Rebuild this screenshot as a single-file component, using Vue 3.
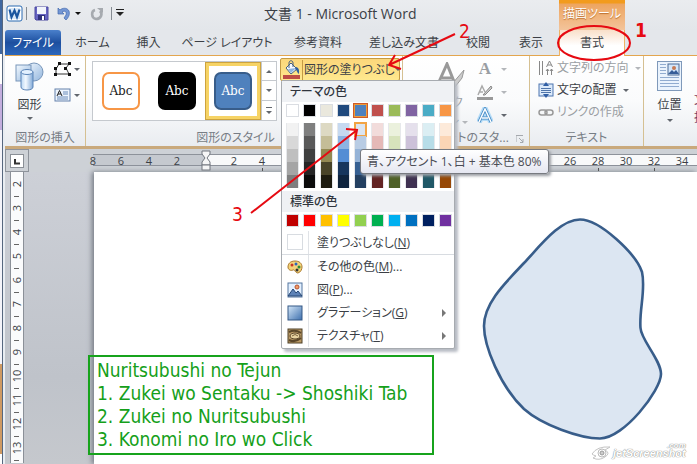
<script setup>
const tabs = ['ホーム', '挿入', 'ページ レイアウト', '参考資料', '差し込み文書', '校閲', '表示']

const themeColors = [
  { base: '#ffffff', shades: ['#f2f2f2', '#d8d8d8', '#bfbfbf', '#a5a5a5', '#7f7f7f'] },
  { base: '#000000', shades: ['#7f7f7f', '#595959', '#3f3f3f', '#262626', '#0c0c0c'] },
  { base: '#eae8dd', shades: ['#ddd9c3', '#c4bd97', '#938953', '#494429', '#1d1b10'] },
  { base: '#1f497d', shades: ['#c6d9f0', '#8db3e2', '#548dd4', '#17365d', '#0f243e'] },
  { base: '#4f81bd', shades: ['#dbe5f1', '#b8cce4', '#95b3d7', '#366092', '#244061'], selected: true },
  { base: '#c0504d', shades: ['#f2dcdb', '#e5b9b7', '#d99694', '#953734', '#632423'] },
  { base: '#9bbb59', shades: ['#ebf1dd', '#d7e3bc', '#c3d69b', '#76923c', '#4f6128'] },
  { base: '#8064a2', shades: ['#e5e0ec', '#ccc1d9', '#b2a2c7', '#5f497a', '#3f3151'] },
  { base: '#4bacc6', shades: ['#dbeef3', '#b7dde8', '#92cddc', '#31859b', '#205867'] },
  { base: '#f79646', shades: ['#fdeada', '#fbd5b5', '#fac08f', '#e36c09', '#974806'] },
]
const standardColors = ['#c00000', '#ff0000', '#ffc000', '#ffff00', '#92d050', '#00b050', '#00b0f0', '#0070c0', '#002060', '#7030a0']

const marginTicks = [8, 6, 4, 2]
const textTicks = Array.from({ length: 17 }, (_, i) => (i + 1) * 2)
const verticalTicks = Array.from({ length: 12 }, (_, i) => i + 2)

const steps = [
  'Nuritsubushi no Tejun',
  '1. Zukei wo Sentaku -> Shoshiki Tab',
  '2. Zukei no Nuritsubushi',
  '3. Konomi no Iro wo Click',
]
</script>

<template>
  <div class="desktop">
    <div class="window">
      <header class="titlebar">
        <div class="quick">
          <svg class="word-icon" width="17" height="17" viewBox="0 0 17 17">
            <rect x="1" y="1" width="15" height="15" rx="2" fill="#fff" stroke="#2a6ab2" />
            <rect x="3" y="3" width="11" height="11" fill="#d9e8f7" />
            <path d="M3.500 4.500L5.500 12L8.500 5.500L11 12L13.500 4.500" fill="none" stroke="#1b569f" stroke-width="2.200" />
          </svg>
          <i class="bar"></i>
          <button class="save" aria-label="上書き保存">
            <svg width="15" height="15" viewBox="0 0 15 15">
              <path d="M1 1H14V14H2L1 13Z" fill="#6865c2" stroke="#4b48a0" />
              <rect x="3" y="1" width="9" height="7" fill="#f1f4fb" />
              <path d="M4 9H11V14H4Z" fill="#30317c" />
              <rect x="8" y="10" width="2" height="4" fill="#fff" />
            </svg>
          </button>
          <button class="undo" aria-label="元に戻す">
            <svg width="14" height="14" viewBox="0 0 14 14">
              <path d="M1 1V7H7L5 5C8 3 10 5 9 8L7 11L9 13C12 10 13 7 12 4C10 0 5 1 3 3Z" fill="#7497d5" stroke="#4269ae" stroke-width=".7" />
            </svg>
          </button>
          <i class="caret dark"></i>
          <button class="redo" aria-label="やり直し">
            <svg width="14" height="14" viewBox="0 0 14 14">
              <path d="M5 3C1 4 1 11 6 12C11 12 13 7 10 4" fill="none" stroke="#a6aaaf" stroke-width="2.600" />
              <path d="M7 1H13V6Z" fill="#a6aaaf" />
            </svg>
          </button>
          <i class="bar"></i>
          <i class="more"></i>
        </div>
        <h1>文書 1 - Microsoft Word</h1>
        <div class="context">描画ツール</div>
      </header>

      <nav class="tabs">
        <a class="file" href="#">ファイル</a>
        <a v-for="t in tabs" :key="t" href="#">{{ t }}</a>
        <a class="active" href="#">書式</a>
      </nav>

      <section class="ribbon">
        <div class="group">
          <div class="body insert">
            <button class="big">
              <svg width="29" height="29" viewBox="0 0 29 29">
                <defs>
                  <linearGradient id="shape" x2="1" y2="1"><stop stop-color="#f4faff" /><stop offset="1" stop-color="#92b5dd" /></linearGradient>
                  <linearGradient id="tube"><stop stop-color="#b9d6f3" /><stop offset=".4" stop-color="#f3f9ff" /><stop offset="1" stop-color="#81a9d7" /></linearGradient>
                </defs>
                <circle cx="19" cy="10" r="9" fill="url(#shape)" stroke="#7896ba" />
                <rect x="1" y="3" width="15" height="16" fill="url(#shape)" stroke="#7896ba" />
                <path d="M6 10V25C6 29 18 29 18 25V10Z" fill="url(#tube)" stroke="#5b84b7" />
                <ellipse cx="12" cy="10" rx="6" ry="2.500" fill="#e3f1ff" stroke="#5b84b7" />
              </svg>
              <span>図形</span>
              <i class="caret"></i>
            </button>
            <div class="stack">
              <button class="small" aria-label="図形の編集">
                <svg width="17" height="14" viewBox="0 0 17 14">
                  <path d="M5 2H15L12 6L15 12H2V7Z" fill="none" stroke="#333" />
                  <path d="M4 0h3v3H4zM14 0h3v3h-3zM10 5h3v3h-3zM14 11h3v3h-3zM0 11h3v3H0zM0 5h3v3H0z" fill="#111" />
                </svg>
                <i class="caret"></i>
              </button>
              <button class="small" aria-label="テキスト ボックス">
                <svg width="17" height="14" viewBox="0 0 17 14">
                  <rect x="1" y="1" width="15" height="12" fill="#eef5fd" stroke="#6481ab" />
                  <path d="M9 4H14M9 6H14M3 9H14M3 11H14" stroke="#6b8cba" />
                  <path d="M3 8L5.500 2.500L8 8M4 6H7" fill="none" stroke="#222" />
                </svg>
                <i class="caret"></i>
              </button>
            </div>
          </div>
          <div class="label">図形の挿入</div>
        </div>

        <div class="group">
          <div class="body styles">
            <div class="gallery">
              <button class="cell"><span class="abc outline">Abc</span></button>
              <button class="cell"><span class="abc solid">Abc</span></button>
              <button class="cell picked"><span class="abc blue">Abc</span></button>
              <div class="scroll">
                <button aria-label="上へ"><i class="caret up"></i></button>
                <button aria-label="下へ"><i class="caret"></i></button>
                <button aria-label="その他"><i class="more thin"></i></button>
              </div>
            </div>
            <button class="fill">
              <svg width="21" height="20" viewBox="0 0 21 20">
                <path d="M5 8L10 3L16 9L10 14Z" fill="#f5f9ff" stroke="#47617f" />
                <path d="M7 9L15 8L10 13Z" fill="#8fb4df" />
                <path d="M8 8V3C8 0 12 0 12 3V7" fill="none" stroke="#49607e" />
                <path d="M15 7C19 8 18 12 18 14C16 13 16 10 14 9Z" fill="#315f9d" />
                <rect x="2" y="15" width="17" height="4" fill="#be4d45" />
              </svg>
              <span>図形の塗りつぶし</span>
              <i class="caret"></i>
            </button>
          </div>
          <div class="label style-label">図形のスタイル</div>
        </div>

        <div class="group">
          <div class="body art">
            <button class="big muted">
              <svg width="30" height="27" viewBox="0 0 30 27">
                <path d="M3 22L12 2L20 22M7 16H17" fill="none" stroke="#999" stroke-width="3" />
                <path d="M17 22L29 8L27 16L20 25L15 26Z" fill="#ccc" stroke="#999" />
              </svg>
              <span>クイック<br>スタイル <i class="caret"></i></span>
            </button>
            <div class="stack">
              <button class="small muted"><span class="serif-a">A</span><i class="caret"></i></button>
              <button class="small muted" aria-label="文字の輪郭">
                <svg width="16" height="17" viewBox="0 0 16 17">
                  <path d="M1 11L5 2L8 8M2 8H6" fill="none" stroke="#aaa" stroke-width="1.500" />
                  <path d="M6 11L14 2L15 4L8 11Z" fill="#ccc" stroke="#888" />
                  <rect y="13" width="16" height="3" fill="#999" />
                </svg>
                <i class="caret"></i>
              </button>
              <button class="small" aria-label="文字の効果">
                <svg width="16" height="17" viewBox="0 0 16 17">
                  <path d="M2 15L8 2L14 15M5 11H11" fill="none" stroke="#b5dcf7" stroke-width="6" stroke-linejoin="round" />
                  <path d="M2 15L8 2L14 15M5 11H11" fill="none" stroke="#4388c4" stroke-width="3" />
                  <path d="M2 15L8 2L14 15M5 11H11" fill="none" stroke="#fff" stroke-width="1.500" />
                </svg>
                <i class="caret"></i>
              </button>
            </div>
          </div>
          <div class="label art-label">ワードアートのスタ... <svg class="launch" width="8" height="8" viewBox="0 0 8 8"><path d="M0 7V.5H7M3 3L7 7M7 4V7.500H4" fill="none" stroke="#a5a9ae" /></svg></div>
        </div>

        <div class="group">
          <div class="body text">
            <button class="row muted">
              <svg width="16" height="16" viewBox="0 0 16 16">
                <path d="M1.500 1V15M4.500 1V15M9.500 9V15M13.500 9V15" stroke="#888" />
                <path d="M8.500 7L11.500 1L14.500 7M9.500 5H13.500M8 11L9.500 9L11 11M12 11L13.500 9L15 11" fill="none" stroke="#888" />
              </svg>
              <span>文字列の方向</span><i class="caret"></i>
            </button>
            <button class="row">
              <svg width="16" height="16" viewBox="0 0 16 16">
                <rect x="1" y="2" width="14" height="12" fill="#dceafa" stroke="#4d75b0" />
                <path d="M3 6.500H13M3 8.500H13M3 10.500H13" stroke="#5075aa" />
                <path d="M8 0L11 4H5ZM8 16L11 12H5Z" fill="#315fa5" />
              </svg>
              <span>文字の配置</span><i class="caret"></i>
            </button>
            <button class="row muted">
              <svg width="16" height="16" viewBox="0 0 16 16">
                <rect x="1" y="6" width="8" height="5" rx="2.500" fill="none" stroke="#999" stroke-width="1.500" />
                <rect x="7" y="6" width="8" height="5" rx="2.500" fill="none" stroke="#999" stroke-width="1.500" />
              </svg>
              <span>リンクの作成</span>
            </button>
          </div>
          <div class="label">テキスト</div>
        </div>

        <div class="group last">
          <div class="body place">
            <button class="big">
              <svg width="25" height="30" viewBox="0 0 25 30">
                <rect x=".5" y=".5" width="24" height="29" fill="#eaf3fd" stroke="#7f99ba" />
                <path d="M3 3.500H9M3 6.500H9M3 9.500H9M3 12.500H9M3 16.500H22M3 19.500H22M3 22.500H22M3 25.500H22" stroke="#91acd0" />
                <rect x="11" y="3" width="11" height="11" fill="#d3e6fa" stroke="#4b6a95" />
                <circle cx="17" cy="7" r="2" fill="#c67b55" />
                <path d="M11 13L15 9L17 11L19 9L22 13Z" fill="#365d98" />
              </svg>
              <span>位置</span>
              <i class="caret"></i>
            </button>
            <button class="wrap">文字列の<br>折り返し</button>
          </div>
        </div>
      </section>

      <div class="ruler">
        <div class="corner">
          <svg width="14" height="14" viewBox="0 0 14 14"><rect x=".5" y=".5" width="13" height="13" fill="#fff" stroke="#8a8f96" /><path d="M5 5V9.500H10" fill="none" stroke="#333" stroke-width="2" /></svg>
        </div>
        <div class="ticks margin"><span v-for="n in marginTicks" :key="n">{{ n }}</span></div>
        <svg class="indent" width="10" height="21" viewBox="0 0 10 21">
          <path d="M1 1H9V4L6 8L9 12V15H1V12L4 8L1 4Z" fill="#f6f6f6" stroke="#72777f" />
          <rect x="1" y="15" width="8" height="5" fill="#f6f6f6" stroke="#72777f" />
        </svg>
        <div class="ticks body-area"><span v-for="n in textTicks" :key="n" :class="{ mark: n % 4 === 0 }">{{ n }}</span></div>
      </div>

      <main class="document">
        <div class="vruler"><span v-for="n in verticalTicks" :key="n"><b>{{ n }}</b></span></div>
        <div class="page"></div>
      </main>
    </div>

    <svg class="freeform" width="182" height="224" viewBox="482 217 182 224">
      <path d="M580 219.500C600 219.500 636 254 642 272C646 290 639 310 640.500 328C641 340 661 360 661 374C661 390 624 438.500 600 438.500C580 438.500 542 425 524 409C500 386 484 346 484 326C484 304 503 285 524 263C540 246 560 219.500 580 219.500Z" fill="#dce6f2" stroke="#385d8a" stroke-width="2.600" />
    </svg>

    <div class="menu">
      <h2>テーマの色</h2>
      <div class="swatches theme">
        <button v-for="c in themeColors" :key="c.base" :class="{ selected: c.selected }" :style="{ background: c.base }" :aria-label="c.base"></button>
      </div>
      <div class="swatches shades">
        <div v-for="c in themeColors" :key="c.base" class="column">
          <button v-for="(s, i) in c.shades" :key="s" :class="{ hover: c.selected && i === 0 }" :style="{ background: s }" :aria-label="s"></button>
        </div>
      </div>
      <h2>標準の色</h2>
      <div class="swatches standard">
        <button v-for="c in standardColors" :key="c" :style="{ background: c }" :aria-label="c"></button>
      </div>
      <button class="item none"><i class="blank"></i><span>塗りつぶしなし(<u>N</u>)</span></button>
      <button class="item">
        <svg width="16" height="16" viewBox="0 0 16 16">
          <path d="M8 2C3 2 1 5 1 8C1 11 4 12 6 11C8 10 8 14 11 14C14 13 15 10 15 8C15 4 12 2 8 2Z" fill="#f4d37a" stroke="#a9782a" />
          <circle cx="5" cy="6" r="1.500" fill="#c93526" /><circle cx="9" cy="5" r="1.500" fill="#2c66bc" /><circle cx="12" cy="8" r="1.500" fill="#2d8b37" /><circle cx="10" cy="11" r="1.500" fill="#333" />
        </svg>
        <span>その他の色(<u>M</u>)...</span>
      </button>
      <button class="item">
        <svg width="16" height="16" viewBox="0 0 16 16">
          <rect x="1" y="1" width="14" height="14" fill="#e3f0ff" stroke="#54769f" />
          <circle cx="10" cy="5" r="2" fill="#ef9d67" stroke="#b85332" />
          <path d="M1 14L6 7L9 11L11 9L15 14Z" fill="#5d82b6" stroke="#294976" />
        </svg>
        <span>図(<u>P</u>)...</span>
      </button>
      <button class="item">
        <svg width="16" height="16" viewBox="0 0 16 16">
          <defs><linearGradient id="grad" x2="1" y2="1"><stop stop-color="#d4e7f8" /><stop offset="1" stop-color="#3d6fae" /></linearGradient></defs>
          <rect x="1" y="1" width="14" height="14" fill="url(#grad)" stroke="#355986" />
        </svg>
        <span>グラデーション(<u>G</u>)</span><i class="sub"></i>
      </button>
      <button class="item">
        <svg width="16" height="16" viewBox="0 0 16 16">
          <rect x="1" y="1" width="14" height="14" fill="#b99965" stroke="#4e4028" />
          <path d="M2 4Q8 1 14 5M2 12Q8 15 14 10" fill="none" stroke="#5a472b" stroke-width="2" />
          <ellipse cx="8" cy="8" rx="5" ry="3" fill="#e8d3a1" stroke="#59452b" /><path d="M5 8Q8 5 11 8" fill="none" stroke="#795f3c" />
        </svg>
        <span>テクスチャ(<u>T</u>)</span><i class="sub"></i>
      </button>
    </div>

    <div class="tooltip" role="tooltip">青、アクセント 1、白 + 基本色 80%</div>

    <div class="note"><p v-for="s in steps" :key="s">{{ s }}</p></div>

    <div class="watermark">
      <svg width="22" height="16" viewBox="0 0 22 16">
        <path d="M1 9Q6 1 19 2L14 5Q20 8 14 12Q8 16 2 13L5 11Q2 10 1 9Z" fill="#fff" stroke="#c4c4c4" />
        <circle cx="11" cy="8" r="4" fill="#fff" stroke="#bbb" /><circle cx="11" cy="8" r="2" fill="#ccc" stroke="#999" />
      </svg>
      <span class="brand">jetScreenshot<small>.com</small></span>
    </div>

    <svg class="marks" width="697" height="464" viewBox="0 0 697 464">
      <g fill="none" stroke="#e60a12" stroke-width="2">
        <ellipse cx="594" cy="43" rx="36" ry="17" />
        <path d="M455 34L389 65M395 55L389 65L401 69" />
        <path d="M251 213L357 130M346 129L357 130L355 140" />
      </g>
    </svg>
    <b class="num one">1</b>
    <b class="num two">2</b>
    <b class="num three">3</b>
  </div>
</template>

<style>
body { margin: 0; overflow: hidden; }
</style>

<style scoped>
.desktop {
  position: relative;
  min-height: 100vh;
  display: flex;
  overflow: hidden;
  box-sizing: border-box;
  padding-left: 2px;
  font: 12px/18px "Open Sans", "Noto Sans CJK JP", sans-serif;
  font-feature-settings: "palt";
  color: #3b3f46;
  background: linear-gradient(#3f67a0 0 54px, #fff 54px 84px, #c3aede 84px 130px, #f4f4fa 130px 364px, #cf9a63 364px 454px, #fff 454px);
}
button { font: inherit; color: inherit; font-feature-settings: inherit; border: 0; padding: 0; margin: 0; background: none; }
a { color: inherit; text-decoration: none; }
h1, h2, p { margin: 0; font: inherit; }
svg { display: block; flex: none; }
.window { flex: 1; min-width: 0; display: flex; flex-direction: column; border-left: 1px solid #56677e; box-shadow: inset 2px 0 #e9edf2; padding-left: 2px; background: #e6e9ed; }

.titlebar { height: 30px; display: grid; grid-template-columns: 259px 295px 66px 1fr; background: linear-gradient(#eaecef, #e3e6ea); }
.quick { display: flex; align-items: center; padding: 0 0 3px 1px; }
.bar { width: 1px; height: 13px; background: #858b92; }
.word-icon { margin-right: 3px; }
.save { margin-left: 7px; }
.undo { margin: 0 4px 0 8px; }
.redo { margin: 0 7px 0 9px; }
h1 { font-size: 14px; line-height: 28px; white-space: nowrap; }
.context { background: linear-gradient(#f29b1d 0 3px, #eda560 4px, #f3c49b); color: #fff; text-align: center; line-height: 28px; text-shadow: 0 1px 1px #b96d2c; white-space: nowrap; }
.caret { display: inline-block; flex: none; width: 0; height: 0; border: 3px solid transparent; border-top-color: #62676e; border-bottom: 0; }
.caret.dark { border-top-color: #111; }
.caret.up { border-top: 0; border-bottom: 3px solid #62676e; }
.more { width: 0; margin-left: 4px; border: 4px solid transparent; border-top-color: #222; border-bottom: 0; position: relative; }
.more::before { content: ""; position: absolute; left: -4px; top: -7px; width: 8px; height: 1px; background: #222; }
.more.thin { margin: 4px 0 0; border-width: 3px 3px 0; border-top-color: #62676e; }
.more.thin::before { left: -3px; width: 6px; background: #62676e; }

.tabs { height: 25px; display: grid; grid-template-columns: 56px 63px 49px 108px 74px 98px 50px 56px 66px 1fr; background: #e4e7eb; border-bottom: 1px solid #e3a64f; }
.tabs a { display: flex; align-items: center; justify-content: center; white-space: nowrap; }
.tabs .file { background: linear-gradient(#4a80cb, #1d4f9f 50%, #2c67bb); color: #fff; border-radius: 3px 3px 0 0; }
.tabs .active { background: linear-gradient(#f9dfc9, #fff 60%); border: solid #f0b263; border-width: 0 1px; margin-bottom: -1px; }

.ribbon { height: 90px; display: grid; grid-template-columns: 81px 317px 127px 114px minmax(0, 1fr); background: linear-gradient(#fff, #fafbfc 50%, #e9ecf0); border-bottom: 3px solid #c9a97c; overflow: hidden; }
.group { display: flex; flex-direction: column; min-width: 0; border-right: 1px solid #d5c092; }
.group.last { border: 0; }
.body { flex: 1; min-height: 0; display: flex; align-items: flex-start; }
.label { height: 21px; line-height: 20px; text-align: center; color: #777d85; white-space: nowrap; position: relative; }
.style-label { padding-right: 17px; }
.art-label { padding-right: 23px; }
.launch { position: absolute; right: 5px; top: 7px; }
.big { display: flex; flex-direction: column; align-items: center; white-space: nowrap; }
.big span { line-height: 17px; }
.muted { color: #9a9ea3; }
.muted .caret { border-top-color: #b3b6ba; }
.insert { padding: 6px 0 0 10px; gap: 10px; }
.insert .big span { margin: 5px 0 4px; }
.stack { display: flex; flex-direction: column; gap: 12px; }
.small { display: flex; align-items: center; gap: 3px; }
.styles { padding: 5px 0 0 6px; gap: 3px; }
.gallery { display: grid; grid-template-columns: 56px 56px 56px 15px; height: 58px; border: 1px solid #c5c9ce; background: #fff; }
.cell { display: grid; place-items: center; border: 3px solid transparent; }
.cell.picked { border: 4px solid #f6d365; outline: 1px solid #cda33e; outline-offset: -1px; background: #fff; }
.abc { width: 34px; height: 34px; border-radius: 7px; border: 2px solid #000; font: 12px/34px "DejaVu Serif", "Liberation Serif", serif; }
.abc.outline { border-color: #f79646; color: #222; }
.abc.solid { background: #000; color: #fff; }
.abc.blue { background: #4f81bd; border-color: #385d8a; color: #fff; }
.scroll { display: grid; grid-template-rows: repeat(3, 1fr); border-left: 1px solid #c5c9ce; }
.scroll button { display: grid; place-items: center; border-bottom: 1px solid #c5c9ce; }
.scroll button:last-child { border: 0; }
.fill { align-self: flex-start; display: flex; align-items: center; margin-top: -3px; width: 120px; height: 23px; border: 1px solid #c49a44; border-radius: 2px; background: linear-gradient(#fcd77b, #fddf83 50%, #ffe98f); white-space: nowrap; }
.fill svg { border-right: 1px solid #c49a44; }
.fill span { flex: 1; text-align: left; padding-left: 1px; }
.fill .caret { margin-right: 3px; }
.art { padding: 4px 0 0 10px; justify-content: space-between; }
.art .big { width: 58px; padding-top: 2px; }
.art .big span { margin-top: 5px; }
.art .big svg { margin-left: 15px; }
.art .stack { padding-right: 22px; gap: 5px; }
.art .small { height: 18px; gap: 8px; }
.serif-a { width: 16px; font: bold 17px/18px "Liberation Serif", serif; text-align: center; }
.text { flex-direction: column; padding: 1px 0 0 8px; }
.row { height: 22px; display: flex; align-items: center; gap: 3px; white-space: nowrap; }
.row .caret { margin-left: 3px; }
.place { padding: 5px 0 0 13px; gap: 12px; }
.place .big span { margin: 5px 0 6px; }
.wrap { padding-top: 30px; text-align: left; white-space: nowrap; color: #7a3d62; }

.ruler { height: 23px; display: flex; align-items: flex-start; background: #cdd1d6; overflow: hidden; }
.corner { width: 22px; height: 21px; border: 1px solid #8e939b; display: grid; place-items: center; margin-right: 64px; flex: none; }
.ticks { display: flex; flex: none; height: 10px; margin-top: 5px; border: solid #8d929a; border-width: 1px 0; font: 11px/11px "Open Sans", sans-serif; }
.ticks span { width: 28px; flex: none; text-align: center; position: relative; }
.ticks.margin { background: #c5c9cf; width: 112px; }
.ticks.margin span:first-child { margin-left: -14px; }
.ticks.body-area { flex: 1; padding-left: 14px; background: #f8f9fa; margin-left: -5px; }
.ticks .mark::after { content: ""; position: absolute; left: 14px; top: 13px; width: 1px; height: 3px; background: #555; }
.indent { position: relative; z-index: 1; margin: 1px 0 0 -4px; }

.document { flex: 1; display: flex; background: linear-gradient(#cdd0d7, #bfc3ca 70%, #c5c8cd); }
.vruler { width: 12px; margin-left: 5px; background: #fafbfc; border: solid #8b9098; border-width: 0 1px; font: 11px/12px "Open Sans", sans-serif; height: 291px; overflow: hidden; }
.vruler span { height: 24px; display: grid; place-items: center; position: relative; }
.vruler span::after { content: ""; position: absolute; left: 3px; top: 24px; width: 5px; height: 1px; background: #666; }
.vruler b { font-weight: normal; transform: rotate(-90deg); }
.page { flex: 1; margin-left: 70px; background: #fff; box-shadow: -2px 0 5px #747a83; }

.freeform { position: absolute; left: 482px; top: 217px; }
.menu { position: absolute; left: 281px; top: 80px; width: 172px; background: #fff; border: 1px solid #a7abb0; border-radius: 2px; box-shadow: 3px 3px 3px #b8bcc4; padding-bottom: 1px; }
.menu h2 { height: 21px; line-height: 21px; padding-left: 8px; font-weight: 500; background: #eff1f4; color: #30353d; }
.swatches { display: grid; grid-template-columns: repeat(10, 13px); gap: 4px; padding: 2px 4px; }
.theme button, .standard button { height: 13px; border: 1px solid #dadde2; box-sizing: border-box; }
.theme .selected { border-color: #ef9b38; outline: 1px solid #cf5b27; }
.shades { padding: 4px 4px 3px; }
.column { display: grid; grid-template-rows: repeat(5, 13px); border: solid #e6e8eb; border-width: 0 1px; }
.column .hover { outline: 2px solid #f2a444; outline-offset: -1px; }
.standard { padding: 2px 4px 3px; }
.item { width: 100%; height: 23px; display: flex; align-items: center; padding: 0 8px 0 5px; text-align: left; }
.item span { flex: 1; border-left: 1px solid #e0e3e7; margin-left: 5px; padding-left: 8px; line-height: 23px; }
.item.none { border-bottom: 1px solid #d8dce1; height: 25px; }
.blank { width: 14px; height: 14px; border: 1px solid #d8dce1; }
.sub { border: 4px solid transparent; border-left-color: #777; border-right: 0; }
.tooltip { position: absolute; left: 360px; top: 149px; padding: 2px 6px; border: 1px solid #777a80; border-radius: 3px; line-height: 19px; white-space: nowrap; background: linear-gradient(#fff, #e5e7f1); color: #4b4d55; box-shadow: 2px 2px 3px #999da3; }
.note { position: absolute; left: 88px; top: 355px; width: 333px; border: 2px solid #17a31c; padding: 2px 2px 2px 7px; font: 19px/23px "DejaVu Sans Condensed", "DejaVu Sans", sans-serif; color: #15a01a; white-space: nowrap; }
.watermark { position: absolute; left: 591px; top: 444px; display: flex; align-items: center; }
.brand { position: relative; font: italic bold 11px/18px "Liberation Sans", sans-serif; color: #fff; text-shadow: 0 0 1px #888, 0 0 1px #888; }
.brand small { position: absolute; right: 0; top: -7px; font-size: 8px; }
.marks { position: absolute; left: 0; top: 0; pointer-events: none; }
.num { position: absolute; font: 19px/24px "DejaVu Sans Condensed", "DejaVu Sans", sans-serif; color: #e60a12; }
.num.one { left: 635px; top: 18px; font-weight: bold; }
.num.two { left: 459px; top: 19px; }
.num.three { left: 232px; top: 202px; }
</style>
